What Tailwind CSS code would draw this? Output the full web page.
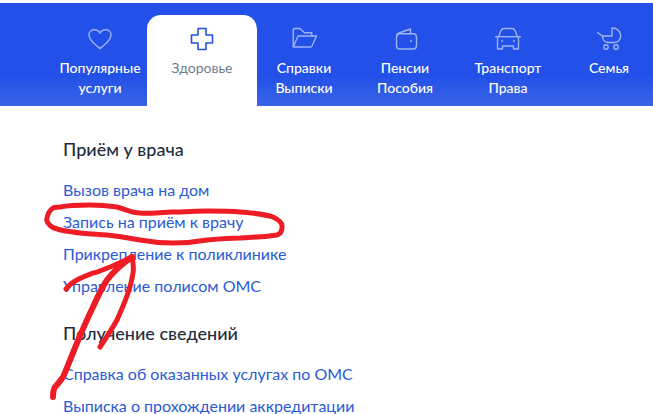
<!DOCTYPE html>
<html lang="en">
<head>
    <meta charset="UTF-8">
    <title>Услуги</title>
    <script src="https://cdn.jsdelivr.net/npm/@tailwindcss/browser@4"></script>
</head>
<body class="bg-white font-['Lato','Noto_Sans',sans-serif] w-[653px] h-[414px] overflow-hidden relative">
    <!-- category tabs -->
    <nav class="mt-[3px] h-[103px] bg-gradient-to-b from-[#2250e8] from-70% to-[#3a63e6] flex pl-[53px] pt-[12px] text-white text-[14px] leading-[20px] font-medium text-center">
        <a class="w-[94px] shrink-0 pt-[12px] flex flex-col items-center">
            <svg class="w-[26px] h-[24px] mb-[7px]" viewBox="0 0 26 24" fill="none" stroke="#9db4f2" stroke-width="1.4"><path d="M13 21.5C8.5 18 2 13.5 2 8C2 5 4.2 2.7 7.2 2.7C9.6 2.7 11.8 3.8 13 6C14.2 3.8 16.4 2.7 18.8 2.7C21.8 2.7 24 5 24 8C24 13.5 17.5 18 13 21.5Z"/></svg>
            <span>Популярные<br>услуги</span>
        </a>
        <a class="w-[110px] shrink-0 h-[92px] bg-white rounded-t-[14px] pt-[12px] flex flex-col items-center text-[#6f7c8c] font-normal">
            <svg class="w-[24px] h-[24px] mb-[7px]" viewBox="0 0 24 24" fill="none" stroke="#2250e8" stroke-width="1.6" stroke-linejoin="round"><path d="M8 1.5H16V8H22.5V16H16V22.5H8V16H1.5V8H8Z"/></svg>
            <span>Здоровье</span>
        </a>
        <a class="w-[94px] shrink-0 pt-[12px] flex flex-col items-center">
            <svg class="w-[28px] h-[24px] mb-[7px]" viewBox="0 0 28 24" fill="none" stroke="#9db4f2" stroke-width="1.4" stroke-linejoin="round"><path d="M3.3 20V3C3.3 2 3.8 1.5 4.8 1.5H10L14.5 5.7H21.7V9"/><path d="M3.3 20L8 9H26.5L22 19C21.7 19.7 21.2 20 20.5 20Z"/></svg>
            <span>Справки<br>Выписки</span>
        </a>
        <a class="w-[108px] shrink-0 pt-[12px] flex flex-col items-center">
            <svg class="w-[24px] h-[24px] mb-[7px] overflow-visible" viewBox="0 0 24 24" fill="none" stroke="#9db4f2" stroke-width="1.4" stroke-linejoin="round"><path d="M3.5 10C3.5 7.5 4.5 6.5 6 6L17.5 2V6.7"/><path d="M3.5 10C3.5 8 5 6.7 7 6.7H20C22.5 6.7 23.5 8 23.5 10V18.5C23.5 21 22.5 22 20 22H7C5 22 3.5 21 3.5 18.5Z"/><circle cx="18" cy="14" r="1" fill="#9db4f2" stroke="none"/></svg>
            <span>Пенсии<br>Пособия</span>
        </a>
        <a class="w-[98px] shrink-0 pt-[12px] flex flex-col items-center">
            <svg class="w-[28px] h-[24px] mb-[7px]" viewBox="0 0 28 24" fill="none" stroke="#9db4f2" stroke-width="1.4" stroke-linejoin="round"><path d="M4.5 9.7L7 3.5C7.6 2.3 8.4 1.5 10 1.5H18C19.6 1.5 20.4 2.3 21 3.5L23.5 9.7"/><path d="M1 9.7H27"/><path d="M3.5 9.7V22H8.5V19H19.5V22H24.5V9.7"/><circle cx="8" cy="14" r="1" fill="#9db4f2" stroke="none"/><circle cx="20" cy="14" r="1" fill="#9db4f2" stroke="none"/></svg>
            <span>Транспорт<br>Права</span>
        </a>
        <a class="w-[104px] shrink-0 pt-[12px] flex flex-col items-center">
            <svg class="w-[26px] h-[24px] mb-[7px]" viewBox="0 0 26 24" fill="none" stroke="#9db4f2" stroke-width="1.4" stroke-linecap="round"><path d="M1.5 5.7L6.5 9"/><path d="M6.5 9H16V1C21 1 24.7 4 24.7 9"/><path d="M6.5 9C6.5 13 9 15.5 12.5 15.5H18C21.5 15.5 24.7 13 24.7 9"/><circle cx="10" cy="20" r="2.2"/><circle cx="20" cy="20" r="2.2"/></svg>
            <span>Семья</span>
        </a>
    </nav>

    <main class="pl-[63px] text-[16px] leading-[20px] text-[#2a5bd7]">
        <h2 class="mt-[32px] mb-[20px] text-[18px] leading-[22px] font-medium text-[#1f2d3d]">Приём у врача</h2>
        <ul class="flex flex-col gap-[12px]">
            <li>Вызов врача на дом</li>
            <li>Запись на приём к врачу</li>
            <li>Прикрепление к поликлинике</li>
            <li>Управление полисом ОМС</li>
        </ul>
        <h2 class="mt-[26px] mb-[20px] text-[18px] leading-[22px] font-medium text-[#1f2d3d]">Получение сведений</h2>
        <ul class="flex flex-col gap-[12px]">
            <li>Справка об оказанных услугах по ОМС</li>
            <li>Выписка о прохождении аккредитации</li>
        </ul>
    </main>

    <!-- red marker scribbles over the page -->
    <svg class="absolute left-0 top-0 w-[653px] h-[414px] pointer-events-none" viewBox="0 0 653 414" fill="none" stroke="#ee1c25" stroke-width="5" stroke-linecap="round" stroke-linejoin="round">
        <path d="M60 207C70 205 80 205 90 205C100 205 110 206 117 207C125 209 132 213 140 213C150 214 162 212 173 212C185 212 196 211 207 211C218 211 230 211 240 212C252 213 265 214 273 217C279 220 283 223 282 227C282 231 280 234 277 235C265 237 252 237 240 238C229 238 218 239 207 240C196 242 184 243 173 243C162 243 151 242 140 240C129 238 118 236 107 235C96 234 84 234 73 232C65 231 57 230 52 227C48 224 46 221 47 218C48 213 50 210 53 208C55 207 58 207 61 207"/>
        <path stroke-width="6" d="M53 397C53 393 53 390 55 387C58 384 60 381 63 377C68 366 72 355 77 343C82 331 87 319 93 307C97 298 101 289 107 280C114 271 123 263 132 257"/>
        <path d="M66 289C69 285 73 282 77 280C82 277 88 275 93 273C99 272 104 269 110 267C118 264 125 260 132 257C133 262 134 268 133 273C132 280 130 287 128 293C125 302 121 311 117 320C112 329 106 338 100 347"/>
    </svg>
</body>
</html>
